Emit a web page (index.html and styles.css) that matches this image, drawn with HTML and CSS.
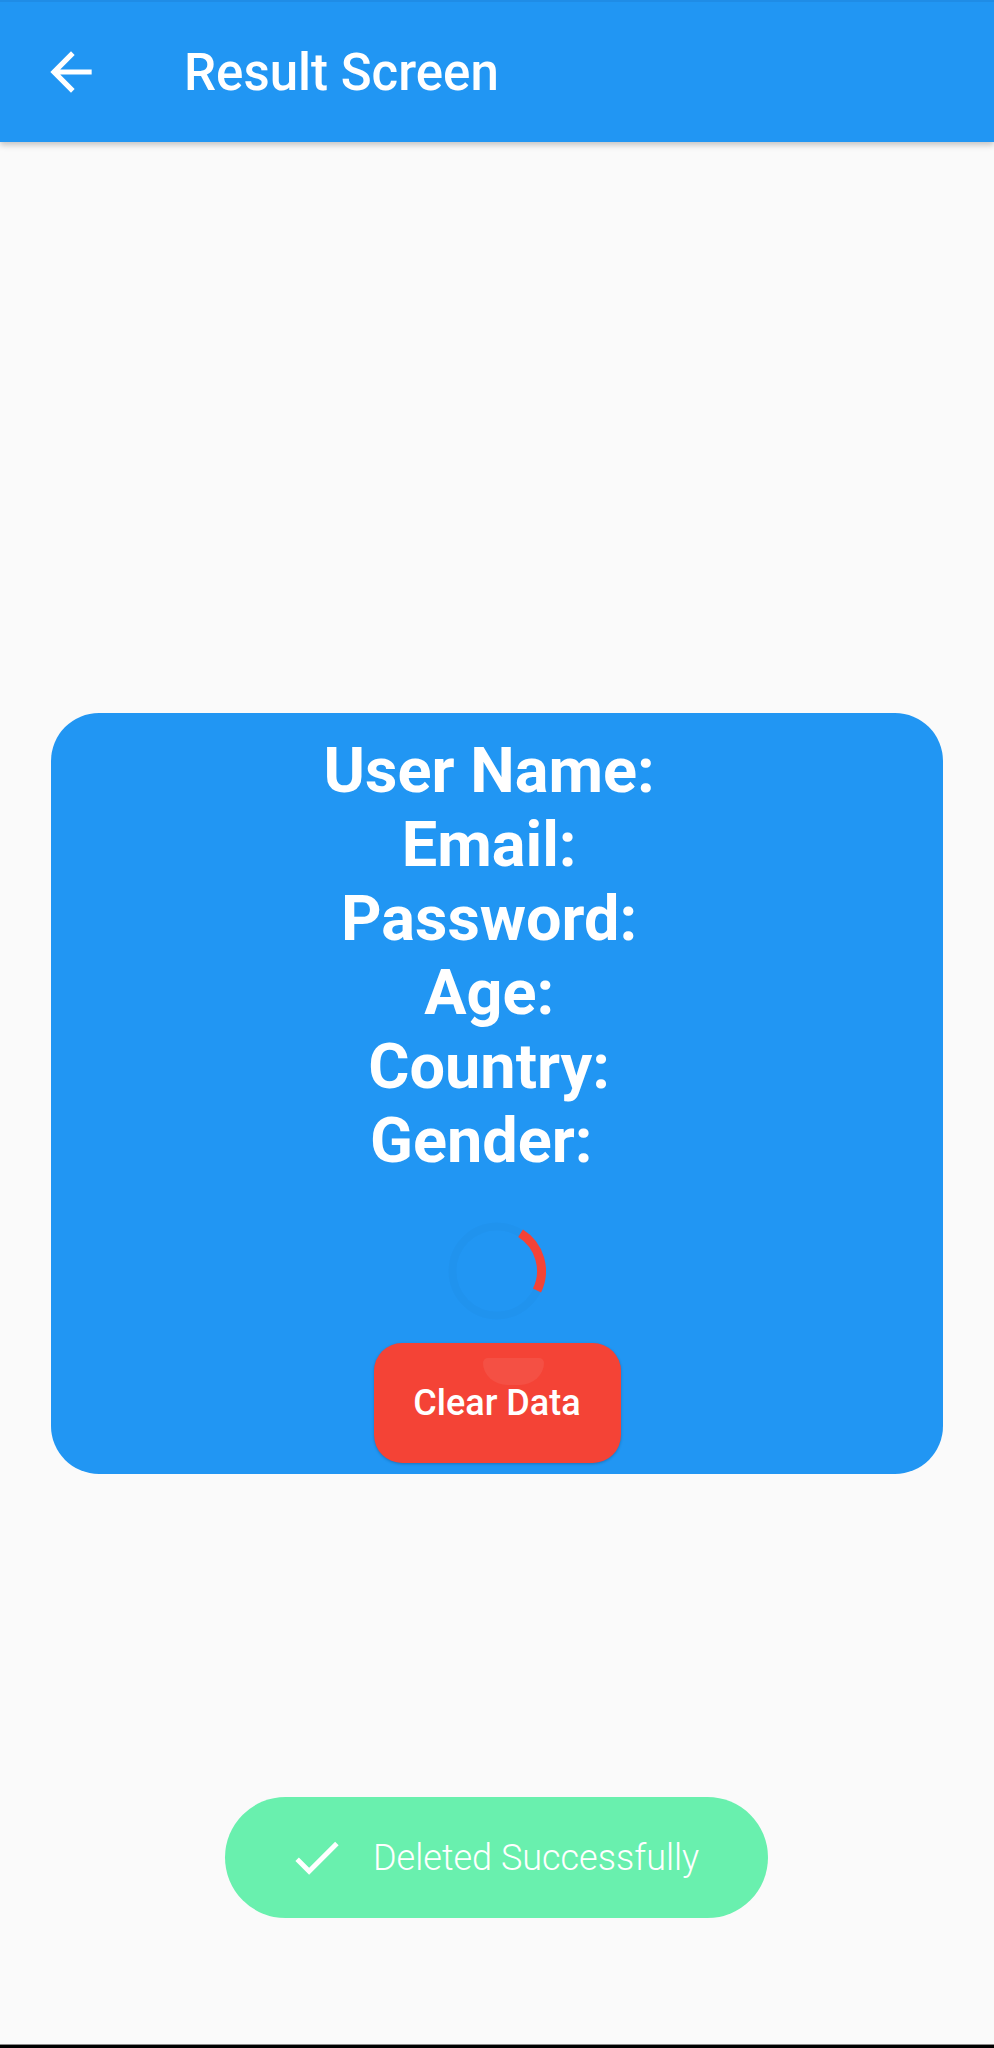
FILE: index.html
```html
<!DOCTYPE html>
<html>
<head>
<meta charset="utf-8">
<title>Result Screen</title>
<link rel="stylesheet" href="styles.css">
</head>
<body>
<div class="screen">
  <header class="appbar">
    <svg class="back" viewBox="0 0 24 24" width="62" height="62"><path fill="#fff" d="M20 11H7.83l5.59-5.59L12 4l-8 8 8 8 1.41-1.41L7.83 13H20v-2z"/></svg>
    <h1 class="title">Result Screen</h1>
  </header>
  <main class="content">
    <section class="card">
      <div class="lines">
        <div class="line">User Name: </div>
        <div class="line">Email: </div>
        <div class="line">Password: </div>
        <div class="line">Age: </div>
        <div class="line">Country: </div>
        <div class="line">Gender:  </div>
      </div>
      <svg class="spinner" viewBox="0 0 98 98" width="98" height="98">
        <circle cx="49" cy="49" r="44.5" fill="none" stroke="rgba(0,0,0,0.018)" stroke-width="8"/>
        <path d="M72.6 11.3 A44.5 44.5 0 0 1 89.0 68.5" fill="none" stroke="#F44336" stroke-width="9"/>
      </svg>
      <button class="clear-btn"><span class="ripple"></span><span class="btn-label">Clear Data</span></button>
    </section>
  </main>
  <div class="navbar"></div>
  <div class="toast">
    <svg class="check" viewBox="0 0 24 24" width="59" height="59"><path fill="#fff" d="M9 16.17L4.83 12l-1.42 1.41L9 19 21 7l-1.41-1.41z"/></svg>
    <span class="toast-text">Deleted Successfully</span>
  </div>
</div>
</body>
</html>
```
FILE: styles.css
```css
html, body {
  margin: 0;
  padding: 0;
}
body {
  background: #FAFAFA;
  font-family: "Roboto", "Noto Sans", sans-serif;
}
.screen {
  position: relative;
  width: 994px;
  height: 2048px;
  overflow: hidden;
  display: flex;
  flex-direction: column;
  background: #FAFAFA;
}
.appbar {
  height: 142px;
  flex: 0 0 142px;
  box-sizing: border-box;
  background: #2196F3;
  border-top: 2px solid #1F8CE6;
  display: flex;
  align-items: center;
  padding-left: 40px;
  box-shadow: 0 3px 6px rgba(0,0,0,0.22);
  position: relative;
  z-index: 2;
}
.back {
  display: block;
  flex: 0 0 auto;
}
.title {
  margin: 0 0 0 82px;
  color: #fff;
  font-size: 51px;
  font-weight: 500;
  line-height: 1;
  letter-spacing: 0;
}
.content {
  flex: 1 1 auto;
  display: flex;
  align-items: center;
  justify-content: center;
}
.card {
  width: 892px;
  box-sizing: border-box;
  background: #2196F3;
  border-radius: 48px;
  padding: 21px 0 11px;
  display: flex;
  flex-direction: column;
  align-items: center;
}
.lines {
  display: flex;
  flex-direction: column;
  align-items: center;
}
.line {
  color: #fff;
  font-size: 63px;
  font-weight: 700;
  line-height: 74px;
  white-space: pre;
}
.spinner {
  display: block;
  margin-top: 44px;
}
.clear-btn {
  position: relative;
  margin-top: 23px;
  width: 247px;
  height: 120px;
  border: none;
  border-radius: 28px;
  background: #F44336;
  color: #fff;
  font-family: "Roboto", "Noto Sans", sans-serif;
  font-size: 36px;
  font-weight: 500;
  padding: 0;
  box-shadow: 0 1px 3px rgba(0,0,0,0.22);
  overflow: hidden;
}
.ripple {
  position: absolute;
  left: 109px;
  top: 15px;
  width: 61px;
  height: 27px;
  background: rgba(255,255,255,0.07);
  border-radius: 6px 6px 30px 30px / 6px 6px 27px 27px;
}
.btn-label {
  position: relative;
}
.navbar {
  flex: 0 0 3px;
  height: 3px;
  background: #000;
  border-top: 1px solid #8a8a8a;
}
.toast {
  position: absolute;
  left: 225px;
  bottom: 130px;
  width: 543px;
  height: 121px;
  box-sizing: border-box;
  border-radius: 61px;
  background: #69F0AE;
  display: flex;
  align-items: center;
  padding-left: 62px;
  gap: 27px;
}
.check {
  display: block;
  flex: 0 0 auto;
}
.toast-text {
  color: #fff;
  font-size: 36px;
  font-weight: 300;
  line-height: 1;
}
```
